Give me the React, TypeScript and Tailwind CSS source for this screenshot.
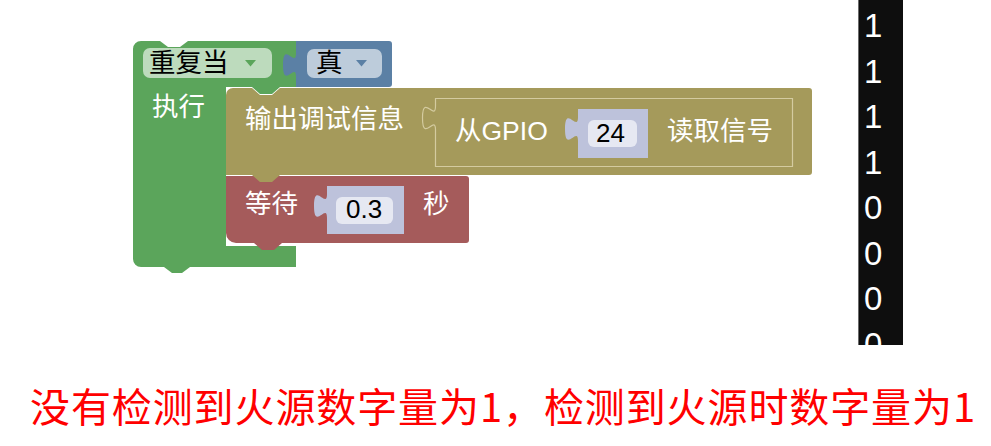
import React from "react";

const GREEN = "#5ba55b";
const BLUE = "#5b80a5";
const OLIVE = "#a59a5b";
const RED = "#a55b5b";
const SHADOW = "#bdc2db";

function Blocks() {
  return (
    <svg
      width="858"
      height="345"
      viewBox="0 0 858 345"
      className="block font-['Liberation_Sans','Noto_Sans_CJK_SC',sans-serif]"
    >
      {/* repeat while (green C block) */}
      <path
        fill={GREEN}
        d="M133,49 A8,8 0 0 1 141,41 H160 l8,6 h12 l8,-6 H296 V87 H280 l-8,7 h-12 l-8,-7 H226 V246 H296 V267 H190 l-8,6 h-10 l-8,-6 H141 A8,8 0 0 1 133,259 Z"
      />
      {/* wait block (red) */}
      <path
        fill={RED}
        d="M226,176 H466 a3,3 0 0 1 3,3 V240 a3,3 0 0 1 -3,3 H282 l-8,7 h-12 l-8,-7 H236 a10,10 0 0 1 -10,-10 Z"
      />
      {/* print block (olive) */}
      <path
        fill={OLIVE}
        d="M226,95 a7,7 0 0 1 7,-7 H252 l8,7 h12 l8,-7 H809 a3,3 0 0 1 3,3 V172 a3,3 0 0 1 -3,3 H280 l-8,7 h-12 l-8,-7 H226 Z"
      />
      {/* GPIO read block (inside olive) */}
      <path
        fill={OLIVE}
        stroke="#d4cba0"
        strokeWidth="1.2"
        d="M435.5,98.5 H792.5 V166.5 H435.5 V130 C435.5,114 422.5,143 422.5,118 C422.5,93 435.5,122 435.5,106 Z"
      />
      {/* blue boolean block */}
      <path
        fill={BLUE}
        d="M296,41 H389 a3,3 0 0 1 3,3 V84 a3,3 0 0 1 -3,3 H296 V77 C296,61 283,90 283,65 C283,40 296,69 296,53 Z"
      />
      {/* number block 24 */}
      <path
        fill={SHADOW}
        d="M578,109 H648 V158 H578 V141 C578,125 565,154 565,129 C565,104 578,133 578,117 Z"
      />
      {/* number block 0.3 */}
      <path
        fill={SHADOW}
        d="M327,186 H404 V234 H327 V218 C327,202 314,231 314,206 C314,181 327,210 327,194 Z"
      />

      {/* dropdown fields */}
      <rect x="143" y="48" width="129" height="30" rx="7" fill="#bddbbd" />
      <path d="M245,60 h11 l-5.5,6.5 Z" fill={GREEN} />
      <rect x="307" y="49" width="75" height="29" rx="7" fill="#bdccdb" />
      <path d="M356,60 h11 l-5.5,6.5 Z" fill={BLUE} />

      {/* number fields */}
      <rect x="588" y="120" width="49" height="27" rx="6" fill="#e6e8f2" />
      <rect x="336" y="197" width="57" height="27" rx="6" fill="#e6e8f2" />

      {/* texts */}
      <text x="149" y="72" fontSize="26.5" fill="#000">重复当</text>
      <text x="316" y="72" fontSize="26.5" fill="#000">真</text>
      <text x="152" y="116" fontSize="26.5" fill="#fff">执行</text>
      <text x="245" y="128" fontSize="26.5" fill="#fff">输出调试信息</text>
      <text x="455" y="140" fontSize="26.5" fill="#fff">从GPIO</text>
      <text x="596" y="142" fontSize="26" fill="#000">24</text>
      <text x="667" y="140" fontSize="26.5" fill="#fff">读取信号</text>
      <text x="245" y="213" fontSize="26.5" fill="#fff">等待</text>
      <text x="346" y="218" fontSize="26" fill="#000">0.3</text>
      <text x="423" y="213" fontSize="26.5" fill="#fff">秒</text>
    </svg>
  );
}

export default function App() {
  const lines = ["1", "1", "1", "1", "0", "0", "0", "0"];
  return (
    <div className="w-[991px] h-[446px] bg-white overflow-hidden flex flex-col">
      <div className="flex h-[345px] shrink-0">
        <div className="w-[858px] shrink-0">
          <Blocks />
        </div>
        <div className="w-[45px] h-[345px] bg-[#0e0e0e] border-l border-[#6b6b6b] overflow-hidden pt-[3px] pl-[5px] font-['Liberation_Sans',sans-serif] text-[33px] leading-[45.5px] text-white">
          {lines.map((l, i) => (
            <div key={i}>{l}</div>
          ))}
        </div>
      </div>
      <div className="mt-[40px] pl-[30px] text-[40px] leading-[40px] tracking-[0.9px] text-[#ff0000] whitespace-nowrap font-['Noto_Sans_CJK_SC',sans-serif]">
        没有检测到火源数字量为1，检测到火源时数字量为1
      </div>
    </div>
  );
}
